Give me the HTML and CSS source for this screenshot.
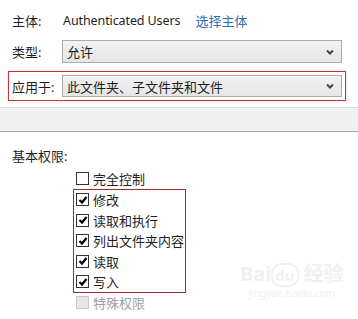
FILE: index.html
```html
<!DOCTYPE html>
<html>

<head>
    <title>权限项目</title>
    <meta charset="utf-8">
    <link rel="stylesheet" href="styles.css">
</head>

<body>
    <div class="top">
        <div class="row principal">
            <span class="label">主体:</span>
            <span class="user">Authenticated Users</span>
            <a class="pick" href="#">选择主体</a>
        </div>
        <div class="row type">
            <span class="label">类型:</span>
            <div class="select">
                <span>允许</span>
                <svg class="chevron" width="8" height="6" viewBox="0 0 8 6"><path d="M1 1.5 L4 4.5 L7 1.5" fill="none" stroke="#444" stroke-width="2"/></svg>
            </div>
        </div>
        <div class="row apply mark">
            <span class="label">应用于:</span>
            <div class="select">
                <span>此文件夹、子文件夹和文件</span>
                <svg class="chevron" width="8" height="6" viewBox="0 0 8 6"><path d="M1 1.5 L4 4.5 L7 1.5" fill="none" stroke="#444" stroke-width="2"/></svg>
            </div>
        </div>
    </div>

    <div class="band"></div>

    <div class="perms">
        <div class="perms-title">基本权限:</div>
        <div class="list">
            <div class="item"><span class="box"></span>完全控制</div>
            <div class="group">
                <div class="item"><span class="box checked"><svg width="10" height="10" viewBox="0 0 10 10"><path d="M1.5 5 L4 7.5 L8.5 2" fill="none" stroke="#000" stroke-width="2.2"/></svg></span>修改</div>
                <div class="item"><span class="box checked"><svg width="10" height="10" viewBox="0 0 10 10"><path d="M1.5 5 L4 7.5 L8.5 2" fill="none" stroke="#000" stroke-width="2.2"/></svg></span>读取和执行</div>
                <div class="item"><span class="box checked"><svg width="10" height="10" viewBox="0 0 10 10"><path d="M1.5 5 L4 7.5 L8.5 2" fill="none" stroke="#000" stroke-width="2.2"/></svg></span>列出文件夹内容</div>
                <div class="item"><span class="box checked"><svg width="10" height="10" viewBox="0 0 10 10"><path d="M1.5 5 L4 7.5 L8.5 2" fill="none" stroke="#000" stroke-width="2.2"/></svg></span>读取</div>
                <div class="item"><span class="box checked"><svg width="10" height="10" viewBox="0 0 10 10"><path d="M1.5 5 L4 7.5 L8.5 2" fill="none" stroke="#000" stroke-width="2.2"/></svg></span>写入</div>
            </div>
            <div class="item disabled"><span class="box"></span>特殊权限</div>
        </div>
    </div>

    <div class="watermark">
        <div class="wm-logo">Bai<span class="wm-du">du</span> 经验</div>
        <div class="wm-url">jingyan.baidu.com</div>
    </div>
</body>

</html>
```
FILE: styles.css
```css
body {
    margin: 0;
    width: 358px;
    height: 319px;
    position: relative;
    overflow: hidden;
    background-color: #fff;
    color: #1e1e1e;
    font-family: "Noto Sans", "Noto Sans CJK SC", sans-serif;
    font-size: 13px;
}

.top {
    padding: 12px 12px 0 8px;
}

.row {
    display: flex;
    align-items: center;
}

.label {
    width: 50px;
    flex: none;
}

.principal {
    height: 16px;
    padding-left: 4px;
}

.principal .label {
    width: 51px;
}

.user {
    font-size: 12.5px;
    letter-spacing: -0.1px;
}

.pick {
    margin-left: 15px;
    color: #2e6db4;
    text-decoration: none;
}

.type {
    margin-top: 12px;
    padding-left: 4px;
    padding-right: 4px;
}

.type .select {
    height: 21px;
}

.apply {
    margin-top: 8px;
}

.mark {
    border: 1px solid #b83a3a;
    box-shadow: 0 0 2px rgba(200, 80, 80, 0.35);
    padding: 3px 3px 3px 3px;
}

.select {
    flex: 1;
    height: 20px;
    display: flex;
    align-items: center;
    justify-content: space-between;
    padding: 0 7px 0 4px;
    border: 1px solid #acacac;
    background: linear-gradient(#f2f2f2, #e6e6e6);
}

.chevron {
    flex: none;
}

.band {
    margin-top: 6px;
    height: 23px;
    border-top: 1px solid #dadada;
    border-bottom: 1px solid #a6a6a6;
    background-color: #f0f0f0;
}

.perms {
    padding: 16px 0 0 12px;
}

.perms-title {
    height: 16px;
    line-height: 16px;
}

.list {
    margin-top: 4px;
    margin-left: 61px;
}

.item {
    height: 20.5px;
    display: flex;
    align-items: center;
    padding-left: 3px;
}

.group {
    width: 109px;
    border: 1px solid #9c2b2b;
    padding-left: 2px;
}

.group .item {
    padding-left: 0;
}

.box {
    width: 11px;
    height: 11px;
    border: 1px solid #333;
    background-color: #fff;
    margin-right: 4px;
    display: flex;
    align-items: center;
    justify-content: center;
    flex: none;
}

.disabled {
    color: #a0a0a0;
    margin-top: -1px;
}

.disabled .box {
    border-color: #c8c8c8;
    background-color: #e6e6e6;
}

/* 水印 */
.watermark {
    position: absolute;
    left: 240px;
    top: 262px;
    text-align: center;
    color: #f0f0f0;
}

.wm-logo {
    font-size: 20px;
    font-weight: bold;
    line-height: 24px;
}

.wm-du {
    font-size: 15px;
    border: 2px solid #f0f0f0;
    border-radius: 10px;
    padding: 0 2px;
}

.wm-url {
    font-size: 10px;
    line-height: 12px;
}
```
